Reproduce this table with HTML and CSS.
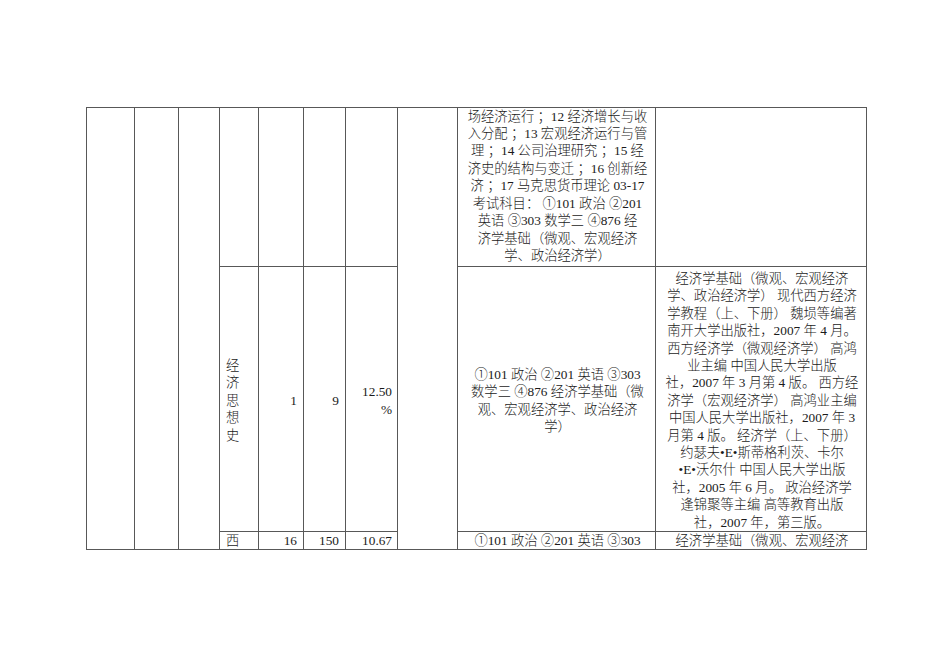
FILE: index.html
```html
<!DOCTYPE html>
<html lang="zh-CN">
<head>
<meta charset="utf-8">
<title>经济学招生表</title>
<link rel="stylesheet" href="styles.css">
</head>
<body>
<div class="sheet">
  <div class="cell span3"></div>
  <div class="cell span3"></div>
  <div class="cell span3"></div>
  <div class="cell"></div>
  <div class="cell"></div>
  <div class="cell"></div>
  <div class="cell"></div>
  <div class="cell span3"></div>
  <div class="cell center text r1">
    <div class="ln">场经济运行 ；12 经济增长与收</div>
    <div class="ln">入分配 ；13 宏观经济运行与管</div>
    <div class="ln">理 ；14 公司治理研究 ；15 经</div>
    <div class="ln">济史的结构与变迁 ；16 创新经</div>
    <div class="ln">济 ；17 马克思货币理论 03-17</div>
    <div class="ln">考试科目： ①101 政治 ②201</div>
    <div class="ln">英语 ③303 数学三 ④876 经</div>
    <div class="ln">济学基础（微观、宏观经济</div>
    <div class="ln">学、政治经济学）</div>
  </div>
  <div class="cell"></div>

  <div class="cell left text r2">
    <div class="ln">经</div>
    <div class="ln">济</div>
    <div class="ln">思</div>
    <div class="ln">想</div>
    <div class="ln">史</div>
  </div>
  <div class="cell right num r2"><div class="ln">1</div></div>
  <div class="cell right num r2"><div class="ln">9</div></div>
  <div class="cell right num r2 pct">
    <div class="ln">12.50</div>
    <div class="ln">%</div>
  </div>
  <div class="cell center text r2">
    <div class="ln">①101 政治 ②201 英语 ③303</div>
    <div class="ln">数学三 ④876 经济学基础（微</div>
    <div class="ln">观、宏观经济学、政治经济</div>
    <div class="ln">学）</div>
  </div>
  <div class="cell center text r2 refs">
    <div class="ln">经济学基础（微观、宏观经济</div>
    <div class="ln">学、政治经济学） 现代西方经济</div>
    <div class="ln">学教程（上、下册） 魏埙等编著</div>
    <div class="ln">南开大学出版社，2007 年 4 月。</div>
    <div class="ln">西方经济学（微观经济学） 高鸿</div>
    <div class="ln">业主编 中国人民大学出版</div>
    <div class="ln">社，2007 年 3 月第 4 版。 西方经</div>
    <div class="ln">济学（宏观经济学） 高鸿业主编</div>
    <div class="ln">中国人民大学出版社，2007 年 3</div>
    <div class="ln">月第 4 版。 经济学（上、下册）</div>
    <div class="ln">约瑟夫•E•斯蒂格利茨、卡尔</div>
    <div class="ln">•E•沃尔什 中国人民大学出版</div>
    <div class="ln">社，2005 年 6 月。 政治经济学</div>
    <div class="ln">逢锦聚等主编 高等教育出版</div>
    <div class="ln">社，2007 年，第三版。</div>
  </div>

  <div class="cell left text r3"><div class="ln">西</div></div>
  <div class="cell right num r3"><div class="ln">16</div></div>
  <div class="cell right num r3"><div class="ln">150</div></div>
  <div class="cell right num r3 pct"><div class="ln">10.67</div></div>
  <div class="cell center text r3"><div class="ln">①101 政治 ②201 英语 ③303</div></div>
  <div class="cell center text r3 refs"><div class="ln">经济学基础（微观、宏观经济</div></div>
</div>
</body>
</html>
```
FILE: styles.css
```css
html, body {
  margin: 0;
  padding: 0;
  background: #ffffff;
}

body {
  font-family: "Liberation Serif", "Noto Sans CJK SC", serif;
  font-size: 13.3px;
  color: #1a1a1a;
}

.sheet {
  display: grid;
  grid-template-columns: 48px 44px 41px 39px 45px 42px 52px 60px 198px 211px;
  grid-template-rows: 159px 265px 18px;
  width: max-content;
  margin: 107px 0 0 86px;
  border-left: 1px solid #585858;
  border-top: 1px solid #585858;
}

.cell {
  box-sizing: border-box;
  border-right: 1px solid #585858;
  border-bottom: 1px solid #585858;
  display: flex;
  flex-direction: column;
  justify-content: center;
  overflow: hidden;
  min-width: 0;
}

.span3 {
  grid-row: span 3;
}

.ln {
  line-height: 17.4px;
  white-space: nowrap;
  font-weight: 300;
}

.center {
  text-align: center;
  padding: 0 4px 0 6px;
}

.refs {
  padding: 0 4px 0 6px;
}

.left {
  text-align: left;
  padding-left: 6px;
}

.right {
  text-align: right;
  padding-right: 6px;
}

.pct {
  padding-right: 5px;
}

.num .ln {
  font-weight: 400;
}

.r1 {
  padding-bottom: 2px;
}

.r2 {
  padding-top: 3px;
}

.r3 {
  justify-content: flex-start;
}

.r3 .ln {
  line-height: 17px;
}
```
